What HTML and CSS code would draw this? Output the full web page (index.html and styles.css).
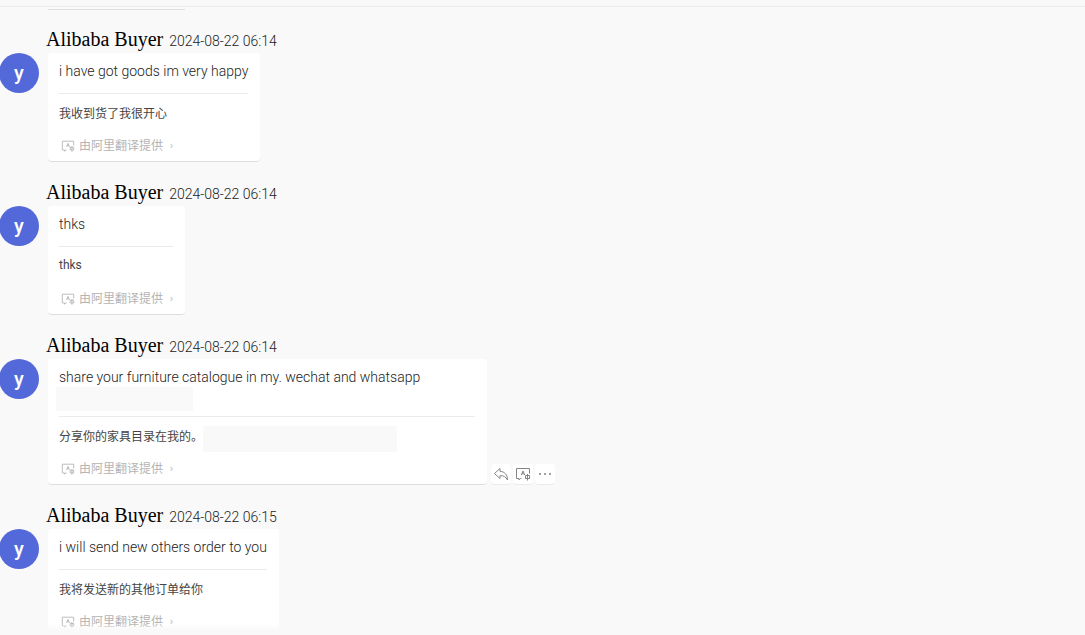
FILE: index.html
```
<!DOCTYPE html>
<html lang="en">
<head>
  <meta charset="UTF-8">
  <meta name="viewport" content="width=device-width, initial-scale=1.0">
  <link rel="stylesheet" href="styles.css">
  <title>Messages</title>
</head>
<body>
  <svg class="sprite">
    <defs>
      <symbol id="icon-translate" viewBox="0 0 16 16">
        <path d="M6.500 12.500H5.500l-1.500 1.500v-1.500H1.500v-10h13v5" />
        <path d="M6.300 9L8 5l1.700 4M7 7.800h2" />
        <path d="M10.500 9.500h4v3h-4zM12.500 8v6.500" />
      </symbol>
      <symbol id="icon-reply" viewBox="0 0 16 16">
        <path d="M7 2.500L1.500 7.500L7 12.500V9.700c3.500-.2 5.800 1 7.500 4.300c0-5-2.500-8.300-7.500-8.700z" />
      </symbol>
      <symbol id="icon-more" viewBox="0 0 16 16">
        <circle cx="3" cy="8" r="1" />
        <circle cx="8" cy="8" r="1" />
        <circle cx="13" cy="8" r="1" />
      </symbol>
    </defs>
  </svg>
  <header class="topbar"></header>
  <main class="chat">
    <div class="previous"></div>

    <article class="message">
      <div class="message-head">
        <span class="name">Alibaba Buyer</span>
        <time class="time">2024-08-22 06:14</time>
      </div>
      <div class="message-row">
        <div class="avatar">y</div>
        <div class="bubble">
          <p class="original">i have got goods im very happy</p>
          <p class="translated" lang="zh">我收到货了我很开心</p>
          <a class="provider" href="#" lang="zh"><svg class="icon"><use href="#icon-translate" /></svg>由阿里翻译提供<span class="arrow">›</span></a>
        </div>
      </div>
    </article>

    <article class="message">
      <div class="message-head">
        <span class="name">Alibaba Buyer</span>
        <time class="time">2024-08-22 06:14</time>
      </div>
      <div class="message-row">
        <div class="avatar">y</div>
        <div class="bubble">
          <p class="original">thks</p>
          <p class="translated">thks</p>
          <a class="provider" href="#" lang="zh"><svg class="icon"><use href="#icon-translate" /></svg>由阿里翻译提供<span class="arrow">›</span></a>
        </div>
      </div>
    </article>

    <article class="message">
      <div class="message-head">
        <span class="name">Alibaba Buyer</span>
        <time class="time">2024-08-22 06:14</time>
      </div>
      <div class="message-row">
        <div class="avatar">y</div>
        <div class="bubble bubble-wide">
          <p class="original">share your furniture catalogue in my. wechat and whatsapp<span class="mask mask-line"></span></p>
          <p class="translated" lang="zh">分享你的家具目录在我的。<span class="mask mask-inline"></span></p>
          <a class="provider" href="#" lang="zh"><svg class="icon"><use href="#icon-translate" /></svg>由阿里翻译提供<span class="arrow">›</span></a>
        </div>
        <div class="actions">
          <button class="action" type="button" aria-label="Reply"><svg class="icon"><use href="#icon-reply" /></svg></button>
          <button class="action" type="button" aria-label="Translate"><svg class="icon"><use href="#icon-translate" /></svg></button>
          <button class="action action-more" type="button" aria-label="More"><svg class="icon"><use href="#icon-more" /></svg></button>
        </div>
      </div>
    </article>

    <article class="message">
      <div class="message-head">
        <span class="name">Alibaba Buyer</span>
        <time class="time">2024-08-22 06:15</time>
      </div>
      <div class="message-row">
        <div class="avatar">y</div>
        <div class="bubble">
          <p class="original">i will send new others order to you</p>
          <p class="translated" lang="zh">我将发送新的其他订单给你</p>
          <a class="provider" href="#" lang="zh"><svg class="icon"><use href="#icon-translate" /></svg>由阿里翻译提供<span class="arrow">›</span></a>
        </div>
      </div>
    </article>
  </main>
  <footer class="bottombar"></footer>
</body>
</html>
```
FILE: styles.css
```
:root {
  --bg-color: #f9f9f9;
  --line-color: #ebebeb;
  --avatar-color: #5469d9;
  --text-color: #222;
}

* {
  box-sizing: border-box;
}

body {
  background-color: var(--bg-color);
  color: var(--text-color);
  display: flex;
  flex-direction: column;
  font-family: Roboto, "Noto Sans CJK SC", sans-serif;
  font-size: 14px;
  font-weight: 300;
  height: 100vh;
  margin: 0px;
  overflow: hidden;
}

p {
  margin: 0px;
}

.sprite {
  display: none;
}

.topbar {
  border-bottom: 1px solid var(--line-color);
  flex: none;
  height: 7px;
}

.chat {
  flex: 1;
  min-height: 0px;
  overflow: hidden;
  position: relative;
}

/* last messages fade out under the input area */
.chat::after {
  background: linear-gradient(rgba(249, 249, 249, 0), var(--bg-color));
  bottom: 0px;
  content: "";
  height: 6px;
  left: 0px;
  position: absolute;
  right: 0px;
}

.bottombar {
  flex: none;
  height: 5px;
}

.previous {
  border-bottom: 1px solid #dedede;
  height: 3px;
  margin: 0px 0px 19px 48px;
  width: 137px;
}

.message {
  margin-bottom: 20px;
}

.message-head {
  align-items: baseline;
  display: flex;
  gap: 6px;
  height: 24px;
  line-height: 20px;
  padding-left: 46px;
}

.name {
  color: #000;
  font-family: "Liberation Serif", serif;
  font-size: 20px;
  font-weight: 400;
}

.message-row {
  align-items: flex-start;
  display: flex;
  margin-left: -1px;
}

.avatar {
  background-color: var(--avatar-color);
  border-radius: 50%;
  color: #fff;
  flex: none;
  font-size: 20px;
  font-weight: 500;
  height: 40px;
  line-height: 40px;
  margin-right: 9px;
  text-align: center;
  width: 40px;
}

.bubble {
  background-color: #fff;
  border-bottom: 1px solid #dedede;
  border-radius: 4px;
  display: flex;
  flex-direction: column;
  padding: 8px 12px 5px 11px;
}

.bubble-wide {
  width: 439px;
}

.original {
  border-bottom: 1px solid var(--line-color);
  line-height: 20px;
  padding-bottom: 12px;
}

.translated {
  align-items: center;
  color: #444;
  display: flex;
  font-size: 12px;
  font-weight: 400;
  height: 20px;
  margin: 8px 0px 14px;
}

.provider {
  align-items: center;
  color: #b4b4b4;
  display: flex;
  font-size: 12px;
  font-weight: 400;
  height: 20px;
  line-height: 20px;
  padding-left: 2px;
  text-decoration: none;
}

.icon {
  fill: none;
  height: 16px;
  stroke: currentColor;
  width: 16px;
}

.provider .icon {
  height: 14px;
  margin-right: 4px;
  width: 14px;
}

.arrow {
  font-size: 10px;
  margin-left: 7px;
}

.mask {
  background-color: var(--bg-color);
  display: block;
}

.mask-line {
  height: 24px;
  margin: 0px 0px -7px -3px;
  width: 137px;
}

.mask-inline {
  height: 26px;
  margin-top: 8px;
  width: 194px;
}

.actions {
  align-self: flex-end;
  display: flex;
  gap: 2px;
  margin-left: 4px;
}

.action {
  align-items: center;
  background-color: #fff;
  border: none;
  border-bottom: 1px solid var(--line-color);
  border-radius: 4px;
  color: #858585;
  display: flex;
  height: 21px;
  justify-content: center;
  padding: 0px;
  width: 20px;
}

.action .icon {
  flex: none;
}

.action-more .icon {
  fill: currentColor;
  stroke: none;
}
```
